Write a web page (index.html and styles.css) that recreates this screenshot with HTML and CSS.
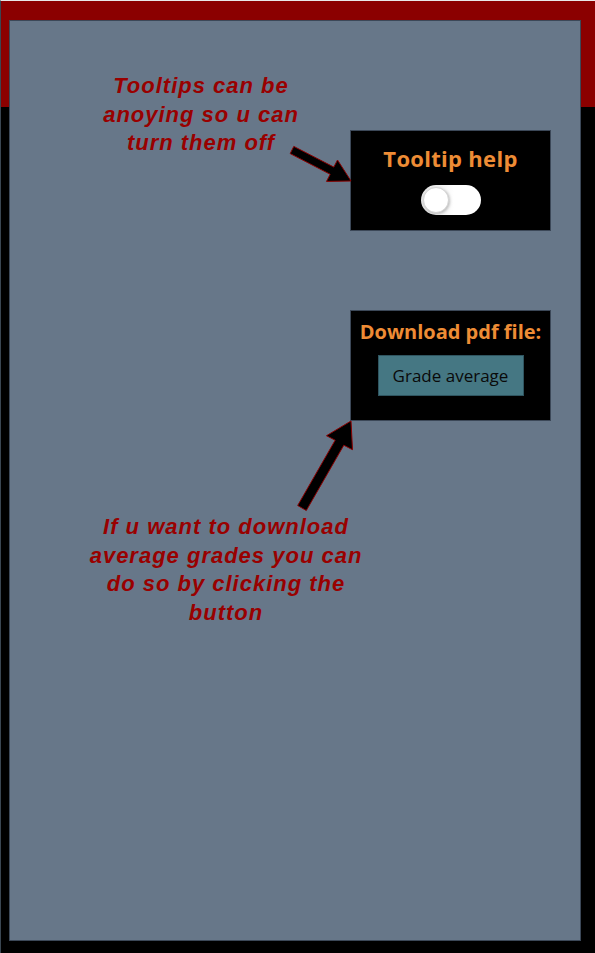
FILE: index.html
```html
<!DOCTYPE html>
<html lang="en">
<head>
<meta charset="utf-8">
<title>Settings help</title>
<link rel="stylesheet" href="styles.css">
</head>
<body>
<div class="page">
  <main class="panel">
    <section class="card card-tooltip">
      <h2 class="card-title">Tooltip help</h2>
      <label class="switch">
        <input type="checkbox">
        <span class="knob"></span>
      </label>
    </section>
    <section class="card card-download">
      <h2 class="card-title card-title-small">Download pdf file:</h2>
      <button class="btn" type="button">Grade average</button>
    </section>
  </main>

  <p class="note note-top">Tooltips can be<br>anoying so u can<br>turn them off</p>
  <p class="note note-bottom">If u want to download<br>average grades you can<br>do so by clicking the<br>button</p>

  <svg class="arrows" width="595" height="953" viewBox="0 0 595 953" aria-hidden="true">
    <polygon points="293.8,146.4 333.8,167.1 337.5,160 351,181 326.5,181.4 330.2,174.3 290.2,153.6" />
    <polygon points="306.3,510.5 343.8,445.2 352.5,449.7 351,421 326.5,435.7 335.2,440.2 297.7,505.5" />
  </svg>
</div>
</body>
</html>
```

FILE: styles.css
```css
* { box-sizing: border-box; }

html, body {
  margin: 0;
  padding: 0;
  background: #000;
}

.page {
  position: relative;
  width: 595px;
  height: 953px;
  padding: 20px 14px 0 9px;
  border-top: 1px solid #e8e8e8;
  border-left: 1px solid #3a4652;
  background: linear-gradient(#8b0000 0, #8b0000 106px, #000 106px);
  font-family: "Liberation Sans", Arial, sans-serif;
}

.panel {
  width: 572px;
  height: 921px;
  margin-top: -1px;
  margin-left: -1px;
  background: #677789;
  border: 1px solid #3c4858;
  display: flex;
  flex-direction: column;
  align-items: flex-end;
  padding: 109px 29px 0 0;
  gap: 79px;
}

.card {
  width: 201px;
  background: #000;
  border: 1px solid #3c4858;
  display: flex;
  flex-direction: column;
  align-items: center;
}

.card-tooltip {
  height: 101px;
  padding-top: 12px;
}

.card-download {
  height: 111px;
  padding-top: 7px;
}

.card-title {
  margin: 0;
  font-family: "Open Sans", "Noto Sans", sans-serif;
  font-weight: 700;
  font-size: 22px;
  line-height: 30px;
  color: #ee8c35;
  letter-spacing: 0.3px;
}

.card-title-small {
  font-size: 20px;
  line-height: 28px;
  letter-spacing: 0;
}

.switch {
  position: relative;
  display: block;
  width: 60px;
  height: 30px;
  margin-top: 12px;
}

.switch input {
  position: absolute;
  opacity: 0;
  width: 0;
  height: 0;
}

.switch::before {
  content: "";
  position: absolute;
  inset: 0;
  border-radius: 15px;
  background: linear-gradient(90deg, #e4e4e4 0, #fff 55%, #fff 100%);
}

.knob {
  position: absolute;
  left: 2px;
  top: 2px;
  width: 26px;
  height: 26px;
  border-radius: 50%;
  background: #fff;
  border: 1px solid #d4d4d4;
  box-shadow: 1px 1px 3px rgba(0, 0, 0, 0.25);
}

.btn {
  margin-top: 9px;
  width: 146px;
  height: 41px;
  background: #457783;
  border: 1px solid #2f5560;
  color: #0a0a0a;
  font-family: "Open Sans", "Noto Sans", sans-serif;
  font-size: 17px;
  padding: 0;
}

.note {
  position: absolute;
  margin: 0;
  color: #990000;
  font-family: "Liberation Sans", Arial, sans-serif;
  font-weight: 700;
  font-style: italic;
  font-size: 22px;
  line-height: 28.5px;
  letter-spacing: 1px;
  text-align: center;
  white-space: nowrap;
}

.note-top {
  left: 60px;
  width: 280px;
  top: 71px;
}

.note-bottom {
  left: 65px;
  width: 320px;
  top: 512px;
}

.arrows {
  position: absolute;
  left: -1px;
  top: -1px;
}

.arrows polygon {
  fill: #000;
  stroke: #8b0000;
  stroke-width: 1;
  stroke-linejoin: miter;
}
```
